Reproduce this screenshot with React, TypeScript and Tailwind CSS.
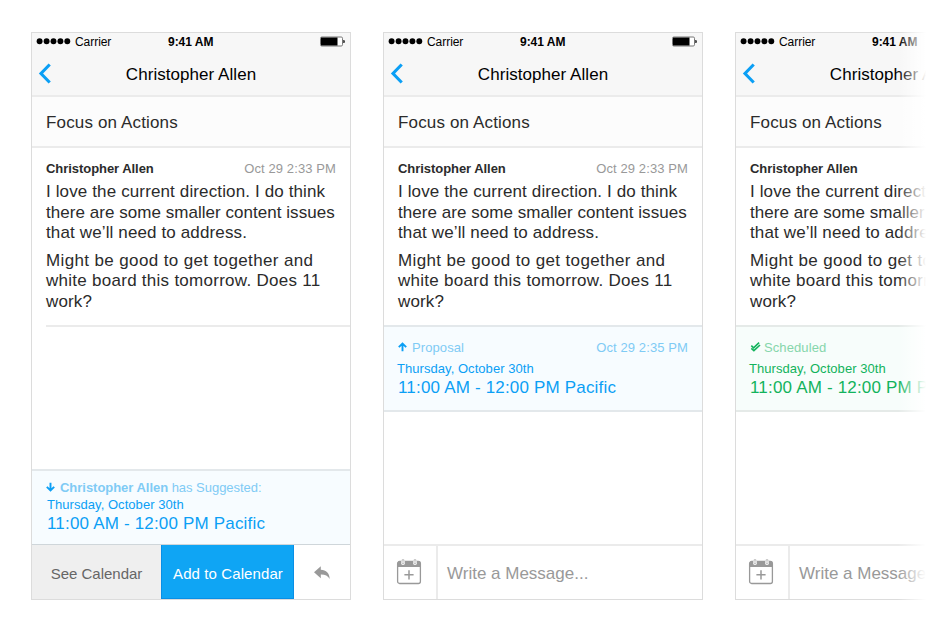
import type { ReactNode } from "react";

function StatusBar() {
  return (
    <div className="relative flex h-[19px] items-center pl-[4px] pr-[5px] text-[12px] text-black">
      <svg width="36" height="8" viewBox="0 0 36 8" className="mt-[-3px]">
        {[3.6, 10.6, 17.5, 24.4, 31.3].map((x) => (
          <circle key={x} cx={x} cy="4.2" r="2.95" />
        ))}
      </svg>
      <span className="ml-[3px] leading-[19px] tracking-[-0.05px]">Carrier</span>
      <span className="absolute left-[136px] top-0 whitespace-nowrap font-bold leading-[19px] tracking-[-0.03px]">9:41 AM</span>
      <svg width="26" height="11" viewBox="0 0 26 11" className="ml-auto mt-[-2px]">
        <rect x="1.5" y="1" width="22" height="9" rx="1.3" fill="#fff" stroke="#777" />
        <rect x="2" y="1.5" width="16.5" height="8" fill="#000" />
        <path d="M24.3 4h.7a.8 1.5 0 0 1 0 3h-.7z" fill="#111" />
      </svg>
    </div>
  );
}

function Phone({ children }: { children: ReactNode }) {
  return (
    <section className="flex h-[568px] w-[320px] shrink-0 flex-col border border-[#dcdcdc] bg-white">
      <header className="h-[64px] border-b-2 border-[#ebebeb] bg-[#f7f7f7]">
        <StatusBar />
        <div className="relative flex h-[43px] items-center justify-center text-black">
          <svg width="14" height="21" viewBox="0 0 14 21" className="absolute left-[6px] top-[11px]" fill="none" stroke="#0b9ff5" strokeWidth="3.1">
            <path d="M11.7 1.5 3 10.5l8.7 9" />
          </svg>
          <h1 className="pt-[2px] text-[17px] leading-[21px] tracking-[0.05px]">Christopher Allen</h1>
        </div>
      </header>
      <div className="h-[51px] border-b-2 border-[#ebebeb] bg-[#fcfcfc] pl-[14px] text-[17px] leading-[51px] tracking-[0.15px]">
        Focus on Actions
      </div>
      {children}
    </section>
  );
}

function Message() {
  return (
    <article className="h-[177px] pl-[14px] pt-[12px]">
      <div className="flex justify-between pr-[14px] text-[13px] leading-[17px]">
        <strong className="tracking-[-0.05px]">Christopher Allen</strong>
        <time className="tracking-[0.1px] text-[#999]">Oct 29 2:33 PM</time>
      </div>
      <p className="mt-[5px] whitespace-nowrap text-[17px] leading-[20.6px] tracking-[0.13px]">
        I love the current direction. I do think
        <br />
        <span className="tracking-[0.04px]">there are some smaller content issues</span>
        <br />
        that we’ll need to address.
      </p>
      <p className="mt-[7px] whitespace-nowrap text-[17px] leading-[20.6px] tracking-[0.15px]">
        <span className="tracking-[0.37px]">Might be good to get together and</span>
        <br />
        <span className="tracking-[0.27px]">white board this tomorrow. Does 11</span>
        <br />
        work?
      </p>
    </article>
  );
}

function Times({ inset = false }: { inset?: boolean }) {
  return (
    <>
      <div className={inset ? "pl-px text-[13px] leading-[17px] tracking-[0.05px]" : "ml-[-1px] text-[13px] leading-[17px] tracking-[0.05px]"}>
        Thursday, October 30th
      </div>
      <div className={inset ? "whitespace-nowrap pl-px pt-px text-[17px] leading-[20px] tracking-[0.18px]" : "whitespace-nowrap pt-px text-[17px] leading-[20px] tracking-[0.18px]"}>
        11:00 AM - 12:00 PM Pacific
      </div>
    </>
  );
}

function Arrow({ up = false }: { up?: boolean }) {
  return (
    <svg width="9" height="10" viewBox="0 0 9 10" fill="none" stroke="#0b9ff5" strokeWidth="1.9" className={up ? "mt-[3px]" : "mt-[3px] rotate-180"}>
      <path d="M4.5 9.2V1.6M.8 5.1 4.5 1.5l3.7 3.6" />
    </svg>
  );
}

function DoubleCheck() {
  return (
    <svg width="11" height="10" viewBox="0 0 11 10" fill="none" stroke="#12b35c" strokeWidth="1.6" className="mt-[3px]">
      <path d="M1.3 3.6 3.6 5.8 9.1.7M1.3 6.4 3.9 8.7 10 3" />
    </svg>
  );
}

function Composer() {
  return (
    <footer className="mt-auto flex h-[55px] border-t-2 border-[#ebebeb]">
      <div className="flex w-[54px] items-center border-r-2 border-[#ebebeb] pl-[12px]">
        <svg width="26" height="26" viewBox="0 0 26 26" fill="none" className="mt-[-2px]">
          <path d="M1.6 8V4.3Q1.6 2 4 2h18q2.4 0 2.4 2.3V8z" fill="#999" />
          <rect x="1.6" y="2.5" width="22.8" height="22" rx="2" stroke="#999" strokeWidth="1.3" />
          <path d="M5 0h4v4a2 2 0 0 1-4 0zM17 0h4v4a2 2 0 0 1-4 0z" fill="#fff" />
          <path d="M6 .8v3a1 1 0 0 0 2 0v-3zM18 .8v3a1 1 0 0 0 2 0v-3z" fill="#fff" stroke="#aaa" strokeWidth=".8" />
          <path d="M13 11.2v9.2M8.4 15.8h9.2" stroke="#999" strokeWidth="1.5" />
        </svg>
      </div>
      <div className="pl-[9px] text-[17px] leading-[56px] text-[#999]">Write a Message...</div>
    </footer>
  );
}

export default function App() {
  return (
    <main className="relative h-[632px] w-[940px] overflow-hidden bg-white font-['Liberation_Sans',Arial,sans-serif] text-[#2b2b2b]">
      <div className="flex gap-[32px] pl-[31px] pt-[32px]">
        <Phone>
          <Message />
          <div className="ml-[14px] h-[2px] bg-[#ebebeb]" />
          <div className="mt-auto h-[76px] border-b border-t-2 border-b-[#cfd6da] border-t-[#e3e8eb] bg-[#f7fcff] pl-[14px] pt-[8px] text-[#0b9ff5]">
            <div className="flex text-[13px] leading-[17px] text-[#7fcbf5]">
              <Arrow />
              <span className="ml-[5px] tracking-[-0.03px]"><b>Christopher Allen</b> has Suggested:</span>
            </div>
            <Times inset />
          </div>
          <div className="flex h-[54px] text-[15px] leading-[57px]">
            <div className="w-[129px] bg-[#efefef] text-center text-[#666]">See Calendar</div>
            <div className="w-[133px] border border-t-0 border-[#098fe6] bg-[#0fa5f4] pl-px text-center tracking-[0.1px] text-white">Add to Calendar</div>
            <div className="flex flex-1 items-center justify-center">
              <svg width="16" height="14" viewBox="0 0 16 14" fill="#999" className="mt-px">
                <path d="M0 6.3 6.8.3v3.5c5.4.1 8.7 3.5 8.9 9.1-1.8-3.2-4.7-4.5-8.9-4.4v3.8z" />
              </svg>
            </div>
          </div>
        </Phone>

        <Phone>
          <Message />
          <div className="h-[87px] border-y-2 border-[#e3e8eb] bg-[#f7fcff] pl-[14px] pr-[14px] pt-[12px] text-[#0b9ff5]">
            <div className="mb-[4px] flex text-[13px] leading-[17px] tracking-[0.1px] text-[#7fcbf5]">
              <Arrow up />
              <span className="ml-[5px]">Proposal</span>
              <time className="ml-auto">Oct 29 2:35 PM</time>
            </div>
            <Times />
          </div>
          <Composer />
        </Phone>

        <Phone>
          <Message />
          <div className="h-[87px] border-y-2 border-[#e5eae8] bg-[#f7fdfb] pl-[14px] pr-[14px] pt-[12px] text-[#12b35c]">
            <div className="mb-[4px] flex text-[13px] leading-[17px] tracking-[0.1px] text-[#86d6ab]">
              <DoubleCheck />
              <span className="ml-[3px]">Scheduled</span>
            </div>
            <Times />
          </div>
          <Composer />
        </Phone>
      </div>
      <div className="absolute inset-y-0 left-[898px] w-[42px] bg-linear-to-r from-white/0 to-white to-[28px]" />
    </main>
  );
}
